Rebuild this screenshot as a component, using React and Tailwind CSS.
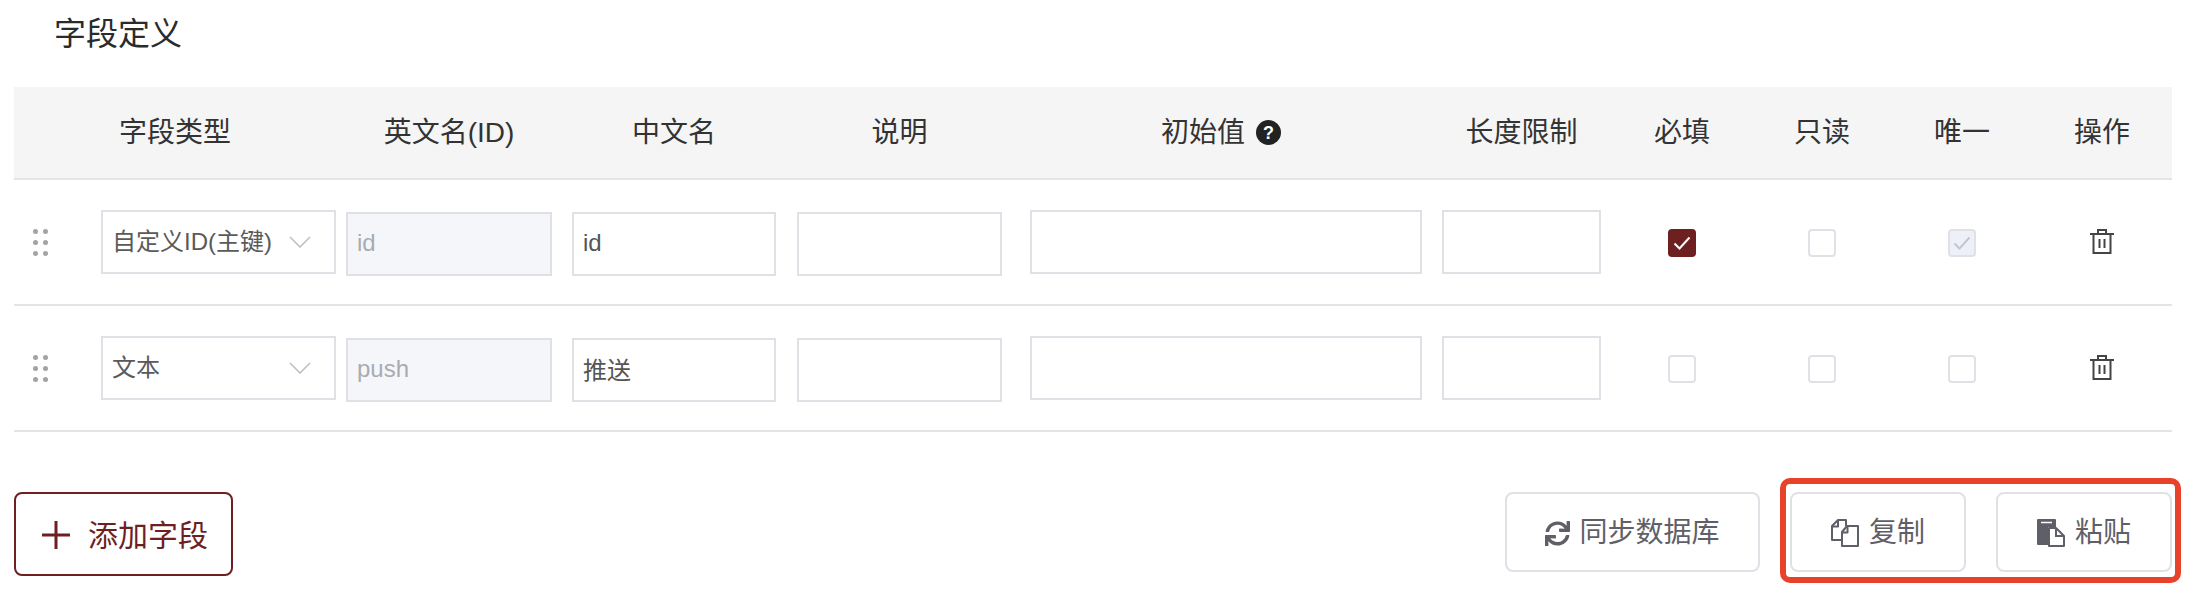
import React from "react";
import { FaSync } from "react-icons/fa";

const FONT = "font-['Liberation_Sans','Noto_Sans_CJK_SC',sans-serif]";
const GRID = "grid grid-cols-[87px_245px_226px_225px_233px_412px_170px_140px_140px_140px_140px]";

function Dots() {
  return (
    <div className="grid grid-cols-[5px_5px] gap-x-[5px] gap-y-[6px] ml-[19px]">
      {[0, 1, 2, 3, 4, 5].map((i) => (
        <span key={i} className="w-[5px] h-[5px] rounded-full bg-[#a3a3a3]" />
      ))}
    </div>
  );
}

function Trash() {
  return (
    <svg width="24" height="25" viewBox="0 0 24 25" fill="none" stroke="#444" strokeWidth="2">
      <path d="M0 5h24" />
      <path d="M8 5V1h8v4" />
      <path d="M3.5 5v19h17V5" />
      <path d="M9.5 10v9M14.5 10v9" />
    </svg>
  );
}

function Check({ state }) {
  if (state === "on")
    return (
      <span className="w-[28px] h-[28px] rounded-[4px] bg-[#6e1f1f] flex items-center justify-center">
        <svg width="18" height="14" viewBox="0 0 18 14" fill="none" stroke="#fff" strokeWidth="2">
          <path d="M1.5 7.5l5 5L16.5 1.5" />
        </svg>
      </span>
    );
  if (state === "disabled")
    return (
      <span className="w-[28px] h-[28px] rounded-[4px] bg-[#edf0f8] border-2 border-[#e0e1e7] flex items-center justify-center">
        <svg width="18" height="14" viewBox="0 0 18 14" fill="none" stroke="#c4c6cd" strokeWidth="2">
          <path d="M1.5 7.5l5 5L16.5 1.5" />
        </svg>
      </span>
    );
  return <span className="w-[28px] h-[28px] rounded-[4px] bg-white border-2 border-[#e0e1e7]" />;
}

function Field({ value = "", disabled, className }) {
  return (
    <input
      readOnly
      value={value}
      className={`h-[64px] border-2 border-[#e0e1e7] pl-[9px] pr-[10px] pb-[3px] text-[24px] outline-none ${
        disabled ? "bg-[#f5f6fa] text-[#a9abb0]" : "bg-white text-[#555]"
      } ${className}`}
    />
  );
}

function Row({ type, en, zh, checks }) {
  return (
    <div className={`${GRID} h-[126px] items-center border-b-2 border-[#e4e4e6]`}>
      <Dots />
      <div className="pr-[10px]">
        <div className="h-[64px] border-2 border-[#e0e1e7] pl-[9px] pr-[23px] flex items-center justify-between text-[24px] text-[#5a5a5a] bg-white">
          <span className="whitespace-nowrap">{type}</span>
          <svg width="22" height="12" viewBox="0 0 22 12" fill="none" stroke="#bdbdc2" strokeWidth="1.5" className="shrink-0">
            <path d="M1 1l10 10L21 1" />
          </svg>
        </div>
      </div>
      <div className="pr-[20px] flex mt-[4px]"><Field value={en} disabled className="w-full" /></div>
      <div className="pr-[21px] flex mt-[4px]"><Field value={zh} className="w-full" /></div>
      <div className="pr-[28px] flex mt-[4px]"><Field className="w-full" /></div>
      <div className="pr-[20px] flex"><Field className="w-full" /></div>
      <div className="pr-[11px] flex"><Field className="w-full" /></div>
      {checks.map((c, i) => (
        <div key={i} className="flex justify-center mt-[2px]"><Check state={c} /></div>
      ))}
      <div className="flex justify-center -mt-[2px]"><Trash /></div>
    </div>
  );
}

function CopyIcon() {
  return (
    <svg width="28" height="28" viewBox="0 0 28 28" fill="none" stroke="#5f6067" strokeWidth="2" strokeLinejoin="round">
      <path d="M10 21H1V7l6-6h8v6" />
      <path d="M1 7.5h6V1" />
      <path d="M11 27V13l5-6h11v20z" />
      <path d="M11 13.5h5.5V7" />
    </svg>
  );
}

function PasteIcon() {
  return (
    <svg width="28" height="28" viewBox="0 0 28 28">
      <path d="M1 0h17a1 1 0 0 1 1 1v7h-8v18H1a1 1 0 0 1-1-1V1a1 1 0 0 1 1-1z" fill="#5f6067" />
      <path d="M4 3.5h11" stroke="#fff" strokeWidth="1.5" />
      <path d="M12 27V9h7l8 8v10z" fill="#fff" stroke="#5f6067" strokeWidth="2" strokeLinejoin="round" />
      <path d="M19 9v8h8" fill="none" stroke="#5f6067" strokeWidth="2" />
    </svg>
  );
}

function Btn({ className, children }) {
  return (
    <button className={`h-[80px] pt-[2px] rounded-[8px] border-2 border-[#e0e1e7] bg-white flex items-center justify-center text-[28px] text-[#5f6067] ${className}`}>
      {children}
    </button>
  );
}

export default function App() {
  const head = "text-center text-[28px] text-[#333] whitespace-nowrap";
  return (
    <div className={`${FONT} w-[2192px] h-[590px] bg-white pl-[14px] pr-[20px] overflow-hidden`}>
      <div className="h-[87px] pl-[40px] pt-[13px] text-[32px] leading-[42px] text-[#2b2b2b]">字段定义</div>

      <div className={`${GRID} h-[93px] items-center bg-[#f5f5f5] border-b-2 border-[#e4e4e6]`}>
        <div className={`col-span-2 pr-[10px] ${head}`}>字段类型</div>
        <div className={`pr-[20px] ${head}`}>英文名(ID)</div>
        <div className={`pr-[21px] ${head}`}>中文名</div>
        <div className={`pr-[28px] ${head}`}>说明</div>
        <div className={`pr-[30px] ${head} flex items-center justify-center gap-[11px]`}>
          初始值
          <span className="w-[25px] h-[25px] rounded-full bg-[#222] text-white text-[18px] font-bold flex items-center justify-center leading-none">?</span>
        </div>
        <div className={`pr-[11px] ${head}`}>长度限制</div>
        <div className={head}>必填</div>
        <div className={head}>只读</div>
        <div className={head}>唯一</div>
        <div className={head}>操作</div>
      </div>

      <Row type="自定义ID(主键)" en="id" zh="id" checks={["on", "off", "disabled"]} />
      <Row type="文本" en="push" zh="推送" checks={["off", "off", "off"]} />

      <div className="mt-[60px] flex items-start">
        <button className="w-[219px] h-[84px] pt-[2px] rounded-[8px] border-2 border-[#6e1f1f] bg-white flex items-center pl-[26px] gap-[18px] text-[30px] text-[#6e1f1f]">
          <svg width="28" height="28" viewBox="0 0 28 28" stroke="#6e1f1f" strokeWidth="3" fill="none">
            <path d="M14 0v28M0 14h28" />
          </svg>
          添加字段
        </button>
        <Btn className="ml-auto w-[255px] gap-[9px]">
          <FaSync size={25} />
          同步数据库
        </Btn>
        <div className="relative ml-[30px] flex gap-[30px]">
          <Btn className="w-[176px] gap-[10px]"><CopyIcon />复制</Btn>
          <Btn className="w-[176px] gap-[10px]"><PasteIcon />粘贴</Btn>
          <div className="absolute -left-[10px] -right-[9px] -top-[14px] -bottom-[11px] border-[6px] border-[#e8432a] rounded-[10px] pointer-events-none" />
        </div>
      </div>
    </div>
  );
}
